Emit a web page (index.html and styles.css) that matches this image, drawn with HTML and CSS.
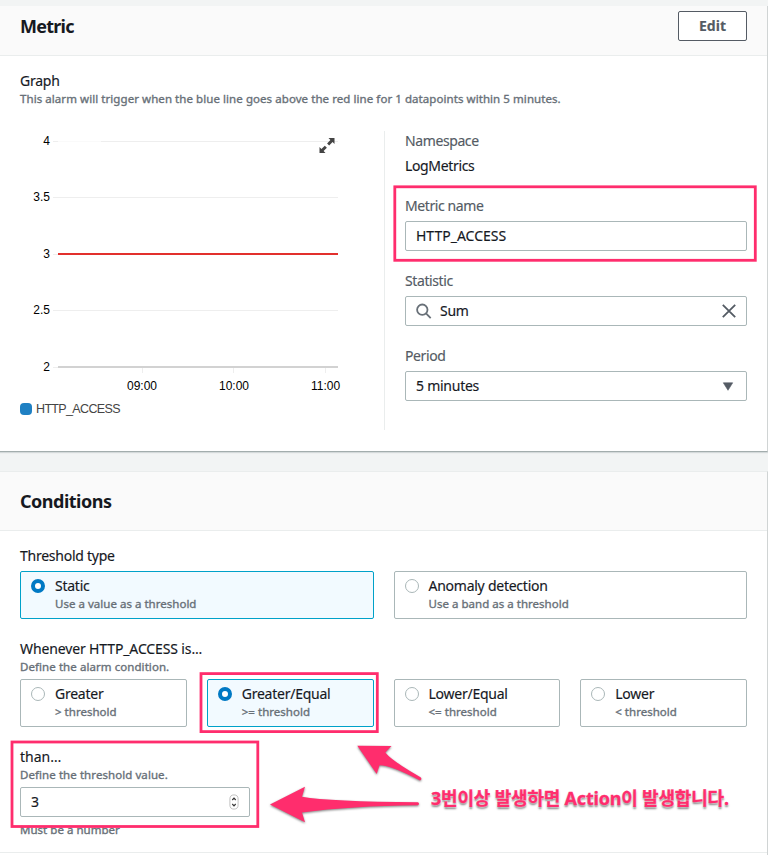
FILE: index.html
```html
<!DOCTYPE html>
<html lang="ko">
<head>
<meta charset="utf-8">
<title>CloudWatch alarm</title>
<link rel="stylesheet" href="styles.css">
</head>
<body>
<main class="page">
  <section class="panel panel-metric">
    <header class="panel-header">
      <h2 class="title">Metric</h2>
      <button class="btn">Edit</button>
    </header>
    <div class="panel-body">
      <div class="label">Graph</div>
      <div class="hint hint-graph">This alarm will trigger when the blue line goes above the red line for 1 datapoints within 5 minutes.</div>
      <div class="columns">
        <div class="graph">
          <svg class="chart" width="344" height="268" viewBox="20 131 344 268">
            <g fill="none" stroke="#eee" stroke-width="1">
              <path d="M53 141.5h5M101 141.5h237M53 197.5h285M53 254.5h5M53 310.5h285M53 367.5h5M142.5 367v6M233.5 367v6M325.5 367v6"/>
            </g>
            <path d="M58 141.5h43" stroke="#fafafa"/>
            <path d="M58 367h280" stroke="#d2d2d2" stroke-width="2"/>
            <path d="M58 254h280" stroke="#e2302d" stroke-width="2"/>
            <g class="axis" text-anchor="end">
              <text x="50" y="145">4</text>
              <text x="50" y="201">3.5</text>
              <text x="50" y="258">3</text>
              <text x="50" y="314">2.5</text>
              <text x="50" y="371">2</text>
            </g>
            <g class="axis" text-anchor="middle">
              <text x="142" y="390">09:00</text>
              <text x="234" y="390">10:00</text>
              <text x="325.5" y="390">11:00</text>
            </g>
            <path d="M328.500 138h6v6l-1.900-1.900-3.400 3.400-2.100-2.100 3.300-3.500zM319.500 147v6h6l-1.900-1.900 3.300-3.300-2.100-2.100-3.400 3.200z" fill="#444"/>
          </svg>
          <div class="legend"><span class="swatch"></span>HTTP_ACCESS</div>
        </div>
        <div class="fields">
          <div class="field">
            <div class="label muted">Namespace</div>
            <div class="value">LogMetrics</div>
          </div>
          <div class="field">
            <div class="label muted">Metric name</div>
            <div class="input input-name">HTTP_ACCESS</div>
          </div>
          <div class="field">
            <div class="label muted">Statistic</div>
            <div class="input">
              <svg class="search" width="16" height="16" viewBox="0 0 16 16" fill="none" stroke="#687078" stroke-width="1.800"><circle cx="6.300" cy="6.700" r="5.200"/><path d="M10 10.400l4.700 4.700"/></svg>
              <span class="grow">Sum</span>
              <svg width="14" height="14" viewBox="0 0 14 14" fill="none" stroke="#545b64" stroke-width="1.800"><path d="M.8.8l12.400 12.400M13.200.8.8 13.200"/></svg>
            </div>
          </div>
          <div class="field">
            <div class="label muted">Period</div>
            <div class="input">
              <span class="grow">5 minutes</span>
              <svg class="caret" width="12" height="9" viewBox="0 0 12 9" fill="#545b64"><path d="M1.300.8h9.400L6 8.300z" stroke="#545b64" stroke-width=".6" stroke-linejoin="round"/></svg>
            </div>
          </div>
        </div>
      </div>
    </div>
  </section>

  <section class="panel panel-conditions">
    <header class="panel-header">
      <h2 class="title title-conditions">Conditions</h2>
    </header>
    <div class="panel-body">
      <div class="group group-type">
        <div class="label">Threshold type</div>
        <div class="tiles">
          <div class="tile selected"><span class="radio"></span><div><div class="label">Static</div><div class="hint">Use a value as a threshold</div></div></div>
          <div class="tile"><span class="radio"></span><div><div class="label">Anomaly detection</div><div class="hint">Use a band as a threshold</div></div></div>
        </div>
      </div>
      <div class="group">
        <div class="label label-wide">Whenever HTTP_ACCESS is...</div>
        <div class="hint hint-form">Define the alarm condition.</div>
        <div class="tiles">
          <div class="tile"><span class="radio"></span><div><div class="label">Greater</div><div class="hint">&gt; threshold</div></div></div>
          <div class="tile selected"><span class="radio"></span><div><div class="label">Greater/Equal</div><div class="hint">&gt;= threshold</div></div></div>
          <div class="tile"><span class="radio"></span><div><div class="label">Lower/Equal</div><div class="hint">&lt;= threshold</div></div></div>
          <div class="tile"><span class="radio"></span><div><div class="label">Lower</div><div class="hint">&lt; threshold</div></div></div>
        </div>
      </div>
      <div class="group">
        <div class="label label-than">than…</div>
        <div class="hint hint-form">Define the threshold value.</div>
        <div class="input input-number">
          <span class="grow">3</span>
          <svg width="10" height="16" viewBox="0 0 10 16" fill="none"><rect x=".9" y=".9" width="8.200" height="14.200" rx="4.100" stroke="#bbb" stroke-width=".9"/><path d="M3.300 6 5 4.200 6.700 6M3.300 10 5 11.800 6.700 10" stroke="#333" stroke-width="1.200"/></svg>
        </div>
        <div class="hint hint-number">Must be a number</div>
      </div>
    </div>
    <div class="additional"></div>
  </section>

  <svg class="marks" width="768" height="855" viewBox="0 0 768 855">
    <g fill="none" stroke="#ff2d6d" stroke-width="2.800">
      <rect x="394.800" y="186.800" width="360.500" height="73.500"/>
      <rect x="201" y="673.600" width="176.300" height="58"/>
      <rect x="12" y="742" width="245.800" height="84.500"/>
    </g>
    <g class="arrows" fill="#ff2d6d">
      <path d="M270 804.500 305 786.700 302 796.700Q330 801.500 418 802.300Q420 803.700 418 805.300Q350 806 302 812.500L305 822.300Z"/>
      <path d="M357.300 745.700 391.500 746 385.300 752.500Q392 761 420.500 777.200Q422.500 779 420 780.500Q392 765.500 379.500 765.200L376.700 774Z"/>
    </g>
  </svg>
  <div class="note">3번이상 발생하면 Action이 발생합니다.</div>
</main>
</body>
</html>
```
FILE: styles.css
```css
* { box-sizing: border-box; }
body { margin: 0; background: #f2f4f4; }
.page {
  position: relative;
  width: 768px;
  height: 855px;
  overflow: hidden;
  padding-top: 6px;
  font-family: "Noto Sans", "Noto Sans CJK KR", sans-serif;
  font-size: 14px;
  line-height: 20px;
  color: #16191f;
  -webkit-text-stroke: 0.15px currentColor;
}
.panel {
  width: 768px;
  background: #fff;
  border-right: 1px solid #d0d4d4;
}
.panel-metric {
  height: 446px;
  border-bottom: 1px solid #a3adad;
  margin-bottom: 19px;
  box-shadow: 0 1px 1px rgba(0, 28, 36, 0.12);
}
.panel-conditions { height: 400px; border-top: 1px solid #eaeded; }
.panel-header {
  display: flex;
  justify-content: space-between;
  align-items: center;
  height: 50px;
  padding: 0 20px;
  background: #fafafa;
  border-bottom: 1px solid #eaeded;
}
.panel-metric .panel-header { padding-bottom: 10px; }
.panel-conditions .panel-header { height: 59px; }
.title { margin: 0; font-size: 18px; line-height: 22px; font-weight: 700; letter-spacing: -0.75px; -webkit-text-stroke: 0; }
.title-conditions { letter-spacing: -0.5px; }
.btn {
  width: 69px;
  height: 30px;
  margin: 0;
  padding: 0;
  border: 1px solid #545b64;
  border-radius: 2px;
  background: #fff;
  color: #545b64;
  font: 700 14px/20px "Noto Sans", sans-serif;
}
.label { line-height: 20px; letter-spacing: -0.25px; white-space: nowrap; }
.label-wide { letter-spacing: -0.13px; }
.label-than { letter-spacing: 0; }
.muted { color: #545b64; letter-spacing: -0.4px; }
.panel-body { padding: 15px 20px 0; }
.hint {
  font-size: 11.5px;
  line-height: 16px;
  color: #687078;
  letter-spacing: 0.02px;
  white-space: nowrap;
  -webkit-text-stroke: 0.35px currentColor;
}
.hint-graph { letter-spacing: 0.065px; }
.hint-form { letter-spacing: 0.07px; }
.columns { display: flex; margin-top: 24px; }
.graph { width: 364px; height: 299px; -webkit-text-stroke: 0; }
.chart { display: block; }
.axis { font: 12px "Liberation Sans", Arial, sans-serif; fill: #000; }
.legend {
  display: flex;
  align-items: center;
  gap: 4px;
  height: 20px;
  font: 12.5px/20px "Liberation Sans", Arial, sans-serif;
  color: #444;
  letter-spacing: -0.65px;
}
.swatch { width: 12px; height: 12px; border-radius: 4px; background: #1f80c3; }
.fields {
  display: flex;
  flex-direction: column;
  gap: 20px;
  width: 363px;
  height: 299px;
  padding-left: 20px;
  border-left: 1px solid #eaeded;
}
.field { display: flex; flex-direction: column; gap: 5px; }
.value { letter-spacing: -0.35px; }
.input {
  display: flex;
  align-items: center;
  height: 30px;
  padding: 0 10px;
  border: 1px solid #aab7b8;
  border-radius: 2px;
  background: #fff;
  letter-spacing: -0.25px;
}
.input-name { letter-spacing: 0; }
.search { margin-right: 8px; }
.grow { flex: 1; }
.caret { margin-right: 2px; }
.group { margin-bottom: 20px; }
.group .tiles { margin-top: 4px; }
.group-type .tiles { margin-top: 5px; }
.tiles { display: flex; gap: 20px; }
.tile {
  display: flex;
  flex: 1 1 0;
  gap: 10px;
  height: 48px;
  padding: 4px 10px;
  border: 1px solid #aab7b8;
  border-radius: 2px;
}
.tile.selected { border-color: #00a1c9; background: #f2faff; }
.radio { width: 14px; height: 14px; margin-top: 3px; border: 1px solid #aab7b8; border-radius: 50%; background: #fff; }
.selected .radio { border: 4px solid #0079c4; }
.input-number { width: 230px; margin-top: 4px; }
.hint-number { margin-top: 5px; }
.additional { margin-top: -6px; border-top: 1px solid #eaeded; }
.marks { position: absolute; left: 0; top: 0; }
.arrows { filter: drop-shadow(0 1px 1px rgba(0, 0, 0, 0.5)); }
.note {
  position: absolute;
  left: 431px;
  top: 786px;
  font: 700 18px/24px "Noto Sans", "Noto Sans CJK KR", sans-serif;
  color: #ff2d6d;
  white-space: nowrap;
  letter-spacing: -0.2px;
  text-shadow: 0 0 2px #fff, 0 2px 2px rgba(0, 0, 0, 0.5);
  -webkit-text-stroke: 0.3px #ff2d6d;
}
```
